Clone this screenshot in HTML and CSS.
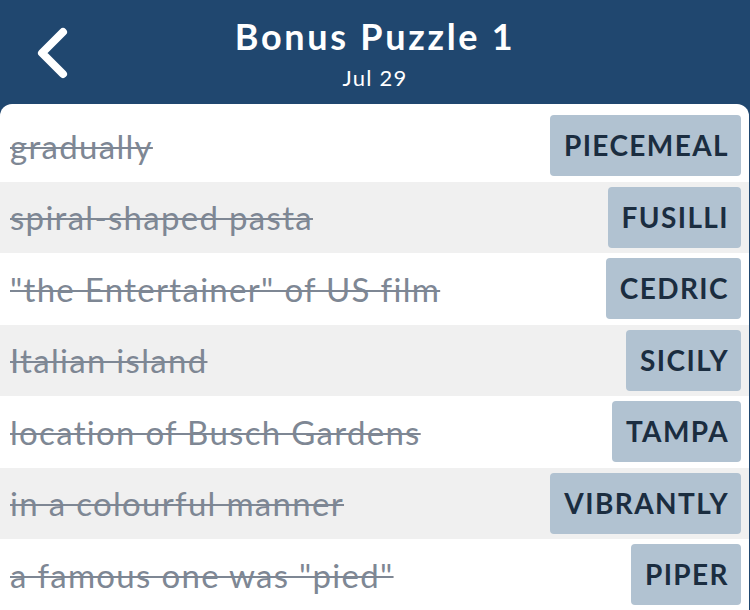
FILE: index.html
```html
<!DOCTYPE html>
<html lang="en">
<head>
    <meta charset="UTF-8">
    <title>Bonus Puzzle 1</title>
    <link rel="stylesheet" href="styles.css">
</head>
<body>
    <div class="header">
        <button class="back">
            <svg width="36" height="52" viewBox="0 0 36 52"><path d="M29 5 L8 26 L29 47" fill="none" stroke="#fff" stroke-width="8" stroke-linecap="round" stroke-linejoin="round"/></svg>
        </button>
        <h1>Bonus Puzzle 1</h1>
        <div class="date">Jul 29</div>
    </div>
    <div class="list">
        <div class="row"><span class="clue">gradually</span><span class="answer">PIECEMEAL</span></div>
        <div class="row alt"><span class="clue">spiral-shaped pasta</span><span class="answer">FUSILLI</span></div>
        <div class="row"><span class="clue">"the Entertainer" of US film</span><span class="answer">CEDRIC</span></div>
        <div class="row alt"><span class="clue">Italian island</span><span class="answer">SICILY</span></div>
        <div class="row"><span class="clue">location of Busch Gardens</span><span class="answer">TAMPA</span></div>
        <div class="row alt"><span class="clue">in a colourful manner</span><span class="answer">VIBRANTLY</span></div>
        <div class="row"><span class="clue">a famous one was "pied"</span><span class="answer">PIPER</span></div>
    </div>
</body>
</html>
```

FILE: styles.css
```css
body {
    margin: 0;
    background-color: #20476f;
    font-family: Lato, "Open Sans", sans-serif;
    height: 610px;
    overflow: hidden;
}
.header {
    position: relative;
    height: 104px;
    color: #fff;
    text-align: center;
}
.header h1 {
    margin: 0;
    padding-top: 13px;
    font-size: 36px;
    font-weight: bold;
    line-height: 46px;
    letter-spacing: 2.7px;
}
.date {
    font-size: 22px;
    line-height: 28px;
    margin-top: 5px;
    letter-spacing: 1.2px;
}
.back {
    position: absolute;
    left: 34px;
    top: 27px;
    background: none;
    border: none;
    padding: 0;
}
.list {
    background-color: #fff;
    border-radius: 12px 12px 0 0;
    margin-right: 1px;
    padding-top: 6px;
}
.row {
    display: flex;
    align-items: center;
    justify-content: space-between;
    height: 71.5px;
    padding: 0 8px 0 10px;
}
.row.alt {
    background-color: #f0f0f0;
}
.clue {
    color: #7e8794;
    font-size: 33px;
    letter-spacing: 1.3px;
    text-decoration: line-through;
    text-decoration-thickness: 2px;
}
.answer {
    background-color: #b1c2d1;
    color: #1b2d40;
    font-size: 28px;
    font-weight: bold;
    letter-spacing: 1.4px;
    border-radius: 4px;
    height: 61px;
    line-height: 61px;
    padding: 0 12px 0 14px;
}
```
